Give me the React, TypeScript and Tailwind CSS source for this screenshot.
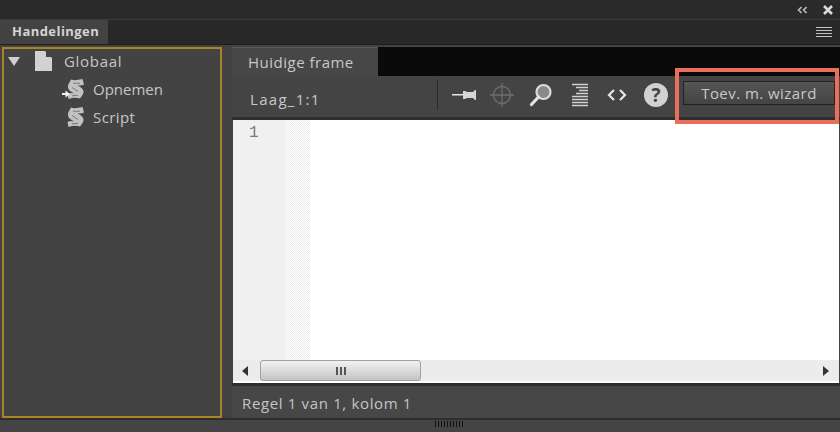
function ScriptIcon({ arrow }: { arrow?: boolean }) {
  return (
    <svg width="24" height="22" viewBox="0 0 24 22" className="shrink-0">
      <path d="M9 1.5 Q13 3 20.5 1 L22 6.5 Q18 8 15.5 7 L19.5 10 Q23 13 20.5 17 L18 20.5 Q13 19 6.5 21 L5.5 16 Q9 14.5 12 15.5 L7.5 12.5 Q5 9.5 6.5 6 Z" fill="#c2c2c2" />
      <path d="M11 5 Q14 6 18 5 M10 9.5 L16 13.5 M10 18 Q13 17 16 17.5" stroke="#7a7a7a" strokeWidth="1" fill="none" />
      {arrow && <path d="M0 15 H3.5 V12.5 L8 16 L3.5 19.5 V17 H0 Z" fill="#f2f2f2" />}
    </svg>
  )
}

function ToolIcons() {
  return (
    <div className="mb-[3px] flex items-center">
      <svg width="26" height="16" viewBox="0 0 26 16" className="ml-[14px]">
        <path d="M0 7 H13 V8.5 H0 Z" fill="#e4e4e4" />
        <path d="M11 4 H13 L15 5 H21 L23 3 H24 V13 H23 L21 11 H15 L13 12 H11 Z" fill="#d6d6d6" />
      </svg>
      <svg width="26" height="26" viewBox="0 0 26 26" className="ml-[11px]" fill="none" stroke="#6e6e6e" strokeWidth="1.3">
        <circle cx="13" cy="13" r="8.5" />
        <path d="M13 1 V25 M1 13 H25" />
      </svg>
      <svg width="26" height="26" viewBox="0 0 26 26" className="ml-[13px]">
        <circle cx="15.5" cy="10" r="7" fill="#8a8a8a" stroke="#dcdcdc" strokeWidth="2.2" />
        <path d="M10.5 15 L3.5 22.5" stroke="#e4e4e4" strokeWidth="3.2" strokeLinecap="round" />
      </svg>
      <svg width="18" height="24" viewBox="0 0 18 24" className="ml-[17px]" stroke="#d0d0d0" strokeWidth="1.5">
        <path d="M1 1.5 H17 M5 4.5 H17 M8 7.5 H17 M5 10.5 H17 M1 13.5 H17 M1 16.5 H17 M1 19.5 H17 M1 22.5 H17" />
      </svg>
      <svg width="20" height="14" viewBox="0 0 20 14" className="ml-[18px]" fill="none" stroke="#e6e6e6" strokeWidth="2.2">
        <path d="M7 2 L2 7 L7 12 M13 2 L18 7 L13 12" />
      </svg>
      <div className="ml-[17px] flex h-[24px] w-[24px] items-center justify-center rounded-full bg-[#d2d2d2] text-[19px] leading-none font-bold text-[#444444]">
        ?
      </div>
    </div>
  )
}

export default function App() {
  return (
    <div
      className="relative flex h-[432px] w-[840px] flex-col overflow-hidden bg-[#424242]"
      style={{ fontFamily: '"Open Sans", "Noto Sans", sans-serif' }}
    >
      <div className="flex h-[20px] shrink-0 items-center justify-end gap-[16px] border-b border-[#3c3c3c] bg-[#2a2a2a] pr-[7px]">
        <svg width="10" height="8" viewBox="0 0 10 8" fill="none" stroke="#bdbdbd" strokeWidth="1.6">
          <path d="M4.5 1 L1.5 4 L4.5 7 M9.5 1 L6.5 4 L9.5 7" />
        </svg>
        <svg width="10" height="10" viewBox="0 0 10 10" stroke="#d8d8d8" strokeWidth="2.6">
          <path d="M1 1 L9 9 M9 1 L1 9" />
        </svg>
      </div>

      <div className="flex h-[25px] shrink-0 items-end justify-between border-b border-[#1c1c1c] bg-[#282828] pr-[8px]">
        <div className="flex h-[24px] w-[108px] items-center bg-[#434343] pl-[12px] text-[13px] font-bold tracking-[0.45px] text-[#d4d4d4]">
          Handelingen
        </div>
        <svg width="16" height="11" viewBox="0 0 16 11" stroke="#c4c4c4" strokeWidth="1" className="mb-[6px]">
          <path d="M0 .5 H16 M0 3.5 H16 M0 6.5 H16 M0 9.5 H16" />
        </svg>
      </div>

      <div className="flex min-h-0 flex-1 pt-[2px]">
        <div className="ml-[2px] w-[220px] shrink-0 border-2 border-[#a98429] bg-[#434343] text-[15px] text-[#c6c6c6]">
          <div className="flex h-[24px] items-center">
            <span className="ml-[4px] h-0 w-0 border-x-[6px] border-t-[9px] border-x-transparent border-t-[#cfcfcf]" />
            <svg width="17" height="20" viewBox="0 0 17 20" className="ml-[15px]">
              <path d="M0 0 H10 L17 7 V20 H0 Z" fill="#d2d2d2" />
              <path d="M11 0 L17 6 H11 Z" fill="#434343" />
            </svg>
            <span className="ml-[12px] tracking-[0.7px]">Globaal</span>
          </div>
          <div className="mt-[3px] flex h-[26px] items-center pl-[58px]">
            <ScriptIcon arrow />
            <span className="ml-[7px]">Opnemen</span>
          </div>
          <div className="mt-[2px] flex h-[26px] items-center pl-[58px]">
            <ScriptIcon />
            <span className="ml-[7px] tracking-[0.4px]">Script</span>
          </div>
        </div>

        <div className="ml-[10px] flex min-w-0 flex-1 flex-col">
          <div className="flex h-[29px] shrink-0 bg-[#0a0a0a]">
            <div className="flex w-[146px] items-center border-t border-[#5a5a5a] bg-[#474747] pl-[16px] text-[15px] tracking-[0.5px] text-[#c8c8c8]">
              Huidige frame
            </div>
          </div>

          <div className="flex h-[44px] shrink-0 items-center border-b-[3px] border-[#2e2e2e] bg-[#444444]">
            <span className="mt-[6px] ml-[18px] w-[187px] text-[15px] tracking-[1.3px] text-[#c8c8c8]">Laag_1:1</span>
            <div className="mb-[4px] h-[31px] w-px bg-[#2a2a2a]" />
            <ToolIcons />
            <button className="mb-[7px] ml-[15px] flex h-[24px] w-[152px] items-center justify-center border border-[#222222] bg-gradient-to-b from-[#555555] to-[#444444] text-[15px] tracking-[0.45px] text-[#c8c8c8]">
              Toev. m. wizard
            </button>
          </div>

          <div className="mr-px ml-px flex min-h-0 flex-1 bg-white">
            <div className="w-[52px] bg-[#f0f0f0] pt-[1px] pl-[16px] font-['Liberation_Mono',monospace] text-[16px] leading-[24px] text-[#777777]">1</div>
            <div className="w-[25px] bg-[repeating-conic-gradient(#ececec_0_25%,#ffffff_0_50%)] bg-[length:2px_2px]" />
          </div>

          <div className="mr-px ml-px flex h-[23px] shrink-0 items-center border-b-[2px] border-white bg-[#ececec] pr-[10px] pl-[9px]">
            <span className="h-0 w-0 border-y-[5px] border-r-[6px] border-y-transparent border-r-[#333333]" />
            <div className="ml-[12px] flex h-[21px] w-[161px] items-center justify-center gap-[2px] rounded-[3px] border border-[#a0a0a0] bg-gradient-to-b from-[#f2f2f2] to-[#c4c4c4]">
              <span className="h-[8px] w-[2px] bg-[#555555]" />
              <span className="h-[8px] w-[2px] bg-[#555555]" />
              <span className="h-[8px] w-[2px] bg-[#555555]" />
            </div>
            <span className="ml-auto h-0 w-0 border-y-[5px] border-l-[6px] border-y-transparent border-l-[#333333]" />
          </div>

          <div className="flex h-[35px] shrink-0 items-center border-t-[3px] border-[#2e2e2e] bg-[#474747] pt-[2px] pl-[10px] text-[15px] tracking-[0.65px] text-[#c4c4c4]">
            Regel 1 van 1, kolom 1
          </div>
        </div>
      </div>

      <div className="flex h-[14px] shrink-0 items-start border-t-[2px] border-[#2e2e2e] bg-[#444444] pt-[1px] pl-[435px]">
        <div className="h-[6px] w-[29px] bg-[repeating-linear-gradient(90deg,#111111_0,#111111_1px,transparent_1px,transparent_3px)]" />
      </div>

      <div className="absolute top-[68px] left-[675px] h-[56px] w-[164px] border-[4px] border-[#e8705a]" />
    </div>
  )
}
